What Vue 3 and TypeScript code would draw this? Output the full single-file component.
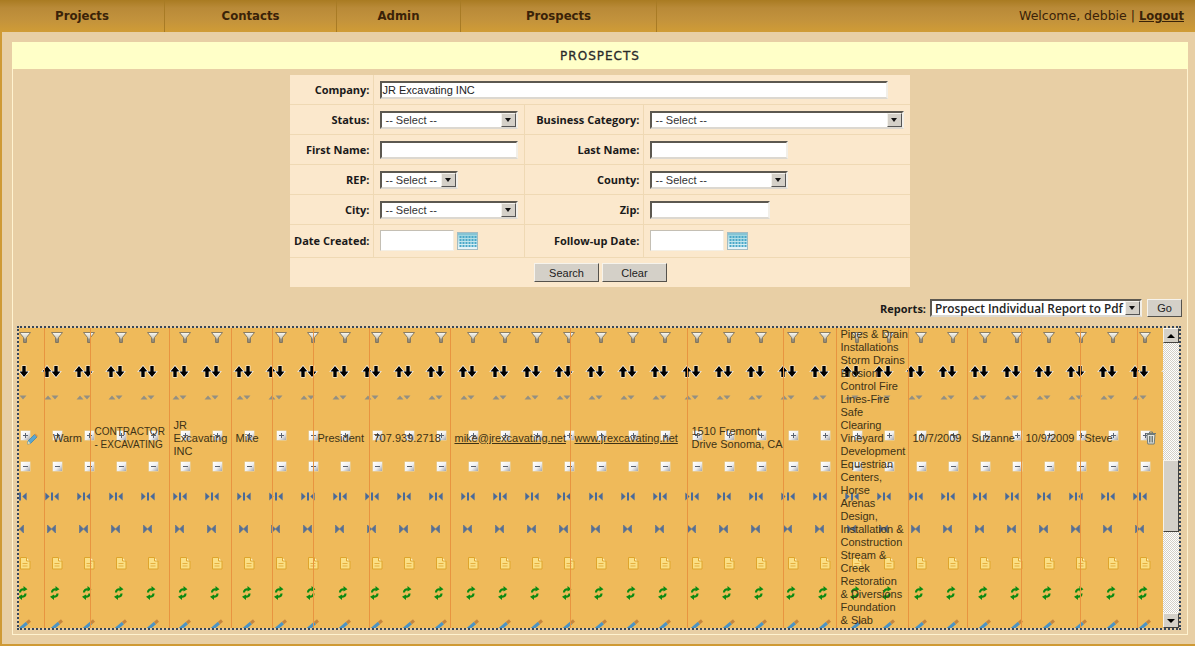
<template>
  <div class="page">
    <!-- shared icons -->
    <svg class="defs" width="0" height="0">
      <defs>
        <linearGradient id="btnGrad" x1="0" y1="0" x2="1" y2="1">
          <stop offset="0" stop-color="#ffffff" />
          <stop offset="0.55" stop-color="#f0f0f0" />
          <stop offset="1" stop-color="#a4a6ae" />
        </linearGradient>
        <linearGradient id="funnelGrad" x1="0" y1="0" x2="0" y2="1">
          <stop offset="0" stop-color="#fbfaf4" />
          <stop offset="1" stop-color="#aca694" />
        </linearGradient>
        <linearGradient id="calGrad" x1="0" y1="0" x2="0" y2="1">
          <stop offset="0" stop-color="#8fd0dc" />
          <stop offset="1" stop-color="#eef8fb" />
        </linearGradient>
        <symbol id="cal" viewBox="0 0 21 18">
          <rect x="0.5" y="0.5" width="20" height="17" fill="url(#calGrad)" stroke="#a4bcc2" />
          <rect x="1" y="1" width="19" height="2" fill="#86c4d4" />
          <g fill="#4aa8c8">
            <template v-for="r in 4" :key="r">
              <rect v-for="c in 6" :key="c" :x="c * 3 - 0.5" :y="r * 3 + 1" width="2" height="2" />
            </template>
          </g>
        </symbol>
      </defs>
    </svg>

    <nav class="nav">
      <a v-for="item in navItems" :key="item.label" class="nav-item" :style="{ width: item.width + 'px' }">{{ item.label }}</a>
      <div class="welcome">Welcome, debbie | <a class="logout">Logout</a></div>
    </nav>

    <main class="content">
      <section class="panel">
        <h1 class="title">PROSPECTS</h1>

        <table class="form">
          <colgroup>
            <col style="width: 84px" />
            <col style="width: 151px" />
            <col style="width: 119px" />
            <col style="width: 266px" />
          </colgroup>
          <tbody>
            <tr class="first-row">
              <th>Company:</th>
              <td colspan="3"><input class="field w-508" value="JR Excavating INC" /></td>
            </tr>
            <tr>
              <th>Status:</th>
              <td><div class="sel w-138"><span>-- Select --</span><i class="sel-btn"></i></div></td>
              <th>Business Category:</th>
              <td><div class="sel w-254"><span>-- Select --</span><i class="sel-btn"></i></div></td>
            </tr>
            <tr>
              <th>First Name:</th>
              <td><input class="field w-138" /></td>
              <th>Last Name:</th>
              <td><input class="field w-138" /></td>
            </tr>
            <tr>
              <th>REP:</th>
              <td><div class="sel w-78"><span>-- Select --</span><i class="sel-btn"></i></div></td>
              <th>County:</th>
              <td><div class="sel w-138"><span>-- Select --</span><i class="sel-btn"></i></div></td>
            </tr>
            <tr>
              <th>City:</th>
              <td><div class="sel w-138"><span>-- Select --</span><i class="sel-btn"></i></div></td>
              <th>Zip:</th>
              <td><input class="field w-120" /></td>
            </tr>
            <tr class="date-row">
              <th>Date Created:</th>
              <td>
                <div class="date"><input class="field-flat" /><svg class="cal" width="21" height="18"><use href="#cal" /></svg></div>
              </td>
              <th>Follow-up Date:</th>
              <td>
                <div class="date"><input class="field-flat" /><svg class="cal" width="21" height="18"><use href="#cal" /></svg></div>
              </td>
            </tr>
            <tr class="actions-row">
              <td colspan="4">
                <div class="actions">
                  <button class="btn w-65">Search</button>
                  <button class="btn w-65">Clear</button>
                </div>
              </td>
            </tr>
          </tbody>
        </table>

        <div class="reports">
          <label>Reports:</label>
          <div class="sel report-sel"><span>Prospect Individual Report to Pdf</span><i class="sel-btn"></i></div>
          <button class="btn go">Go</button>
        </div>

        <div class="grid-box">
          <div class="viewport">
            <!-- the grid's broken sprite background, tiled behind the row -->
            <svg class="sprite" width="1144" height="300">
              <defs>
                <pattern id="tile" patternUnits="userSpaceOnUse" x="-10" y="0" width="32" height="320">
                  <!-- filter -->
                  <path d="M10.500 4.500h11l-4 5v5h-3v-5z" fill="url(#funnelGrad)" stroke="#7e745e" stroke-width="0.9" />
                  <path d="M15.500 10.500h1v4h-1z" fill="#6f634c" />
                  <!-- sort arrows -->
                  <g fill="#000" stroke="#fff" stroke-width="1.2" paint-order="stroke">
                    <path d="M6 38l4.500 5.500h-2.800v5.500h-3.400v-5.500h-2.800z" />
                    <path d="M15 49l4.500-5.500h-2.800v-5.500h-3.400v5.500h-2.800z" />
                  </g>
                  <!-- small triangles -->
                  <g fill="#938f82">
                    <path d="M7 67.500l3.500 4h-7z" />
                    <path d="M14 71.500l3.500-4h-7z" />
                  </g>
                  <!-- plus -->
                  <rect x="11.500" y="102.500" width="10" height="10" fill="#e4d8b8" />
                  <rect x="12" y="103" width="9" height="9" fill="url(#btnGrad)" />
                  <path d="M14 107.500h5M16.500 105v5" stroke="#5a6270" stroke-width="1" />
                  <!-- minus -->
                  <rect x="11.500" y="133.500" width="10" height="10" fill="#e4d8b8" />
                  <rect x="12" y="134" width="9" height="9" fill="url(#btnGrad)" />
                  <path d="M14 138.500h5" stroke="#5a6270" stroke-width="1" />
                  <!-- split -->
                  <g fill="#4a6a98">
                    <path d="M4.300 164.500l4.300 4-4.300 4z" />
                    <rect x="10" y="164.500" width="2" height="8" />
                    <path d="M17.600 164.500v8l-4.300-4z" />
                  </g>
                  <!-- collapse -->
                  <path d="M6.500 197l4 4 4-4v8l-4-4-4 4z" fill="#566f94" stroke="#566f94" stroke-width="0.6" />
                  <!-- document -->
                  <path d="M11.500 229.500h6l3.500 3.500v8h-9.500z" fill="#fbdf84" stroke="#dfa52c" />
                  <path d="M17.500 229.500v3.500h3.500" fill="#fff2c0" stroke="#dfa52c" />
                  <path d="M13.500 235.500h5M13.500 238h5" stroke="#e6b040" />
                  <!-- refresh -->
                  <g fill="none" stroke="#0b8a12" stroke-width="2.200">
                    <path d="M11 264.500c0-2.500 2-3.500 4-3" />
                    <path d="M16.500 265.500c0 2.500-2 3.500-4 3" />
                  </g>
                  <path d="M14.500 258l4 3.300-4 2.200zM13 272l-4-3.300 4-2.200z" fill="#0b8a12" />
                  <!-- pencil -->
                  <path d="M11 301l7-6" stroke="#4d94c4" stroke-width="3.200" />
                  <path d="M18 295l3-2.500" stroke="#c6863e" stroke-width="3.200" />
                </pattern>
              </defs>
              <rect width="1144" height="300" fill="url(#tile)" />
            </svg>

            <table class="rows">
              <colgroup>
                <col v-for="(w, i) in colWidths" :key="i" :style="{ width: w + 'px' }" />
              </colgroup>
              <tbody>
                <tr>
                  <td class="icon-cell">
                    <svg width="12" height="13" viewBox="0 0 12 13">
                      <path d="M2 9l6.500-6.500 2.500 2.500-6.500 6.500-3 .5z" fill="#5aa6d0" stroke="#3c7ea8" stroke-width="0.7" />
                      <path d="M8.500 2.500l1-1 2.500 2.500-1 1z" fill="#d8964a" />
                      <path d="M1.500 12l.5-3 2.500 2.500z" fill="#efe0b0" />
                    </svg>
                  </td>
                  <td class="warm">Warm</td>
                  <td class="caps">CONTRACTOR<br />- EXCAVATING</td>
                  <td>JR<br />Excavating<br />INC</td>
                  <td>Mike</td>
                  <td></td>
                  <td>President</td>
                  <td>707.939.2718</td>
                  <td><a class="link">mike@jrexcavating.net</a></td>
                  <td><a class="link">www.jrexcavating.net</a></td>
                  <td class="nowrap">1510 Fremont<br />Drive Sonoma, CA</td>
                  <td></td>
                  <td class="tall"><template v-for="line in services" :key="line">{{ line }}<br /></template></td>
                  <td>10/7/2009</td>
                  <td>Suzanne</td>
                  <td>10/9/2009</td>
                  <td>Steve</td>
                  <td class="trash-cell">
                    <svg width="12" height="14" viewBox="0 0 12 14" fill="none" stroke="#6f7a78">
                      <path d="M1 2.500h10M4.500 2.500v-1.500h3v1.500" />
                      <path d="M2 3.500l.8 9.500h6.400l.8-9.500z" fill="#e4e6e2" />
                      <path d="M4.500 5v6.500M6 5v6.500M7.500 5v6.500" />
                    </svg>
                  </td>
                </tr>
              </tbody>
            </table>
          </div>

          <div class="scrollbar">
            <div class="sb-btn"><i class="tri up"></i></div>
            <div class="sb-track">
              <div class="sb-thumb"></div>
            </div>
            <div class="sb-btn"><i class="tri down"></i></div>
          </div>
        </div>
      </section>
    </main>
  </div>
</template>

<script setup lang="ts">
const navItems = [
  { label: 'Projects', width: 165 },
  { label: 'Contacts', width: 172 },
  { label: 'Admin', width: 124 },
  { label: 'Prospects', width: 196 },
]

// x of each column's right rule, read off the screen
const GRID_LEFT = 19
const lines = [44, 90, 169, 231, 272, 313, 369, 450, 570, 687, 783, 836, 908, 967, 1021, 1080, 1137, 1163]
const colWidths = lines.map((x, i) => x + 1 - (i === 0 ? GRID_LEFT : lines[i - 1] + 1))

const services = [
  'Pipes & Drain',
  'Installations',
  'Storm Drains',
  'Erosion',
  'Control Fire',
  'Lines-Fire',
  'Safe',
  'Clearing',
  'Vineyard',
  'Development',
  'Equestrian',
  'Centers,',
  'Horse',
  'Arenas',
  'Design,',
  'Installation &',
  'Construction',
  'Stream &',
  'Creek',
  'Restoration',
  '& Diversions',
  'Foundation',
  '& Slab',
]
</script>

<style>
body {
  margin: 0;
  background: #cf9a35;
}
</style>

<style scoped>
.defs {
  position: absolute;
}

.page {
  width: 1195px;
  height: 646px;
  overflow: hidden;
  font-family: "Liberation Sans", sans-serif;
  font-size: 11px;
  color: #222;
}

.nav {
  height: 32px;
  display: flex;
  align-items: stretch;
  background: linear-gradient(#a97b22 0, #b98a38 25%, #c2923c 60%, #d09c36 100%);
  font-family: "DejaVu Sans", sans-serif;
  font-size: 11.7px;
  color: #3a2208;
}

.nav-item {
  box-sizing: border-box;
  display: flex;
  align-items: center;
  justify-content: center;
  border-right: 1px solid #a87b25;
  font-weight: 700;
}

.welcome {
  margin-left: auto;
  padding-right: 11px;
  line-height: 32px;
  font-size: 12.500px;
}

.logout {
  font-weight: 700;
  font-size: 11.500px;
  text-decoration: underline;
}

.content {
  box-sizing: border-box;
  height: 612px;
  margin-left: 2px;
  padding: 10px 0 0 10px;
  background: #e8cfa5;
}

.panel {
  box-sizing: border-box;
  width: 1176px;
  height: 593px;
  border: 1px solid #fff3d0;
  border-top: 0;
}

.title {
  margin: 0 -1px;
  height: 27px;
  background: #ffffc8;
  font-family: "DejaVu Sans", sans-serif;
  font-size: 12px;
  font-weight: 400;
  letter-spacing: 1px;
  line-height: 28px;
  text-align: center;
  color: #2a2a2a;
  -webkit-text-stroke: 0.3px #2a2a2a;
}

.form {
  width: 620px;
  margin: 6px auto 0;
  border-collapse: collapse;
  table-layout: fixed;
  background: #fbe8cc;
}

.form th,
.form td {
  box-sizing: border-box;
  height: 30px;
  padding: 1px 5px 0 6px;
  border: 1px solid #efd9b4;
  vertical-align: middle;
}

.form .first-row th,
.form .first-row td {
  height: 29px;
  border-top: 0;
}

.form tr > :first-child {
  border-left: 0;
}

.form tr > :last-child {
  border-right: 0;
}

.form th {
  padding: 0 4px 0 0;
  font-family: "Open Sans", sans-serif;
  font-size: 11px;
  font-weight: 700;
  text-align: right;
  color: #1a1a1a;
  white-space: nowrap;
}

.date-row th,
.date-row td {
  height: 33px;
}

.form .date-row td {
  padding-top: 0;
}

.form .actions-row td {
  height: 30px;
  border-bottom: 0;
}

.actions {
  display: flex;
  justify-content: center;
  gap: 3px;
}

.field,
.sel {
  box-sizing: border-box;
  height: 18px;
  border: 2px solid;
  border-color: #5c5850 #f2efe8 #dcd8d0 #5c5850;
  background: #fff;
}

.field {
  display: block;
  padding: 0;
  font: 11px "Liberation Sans", sans-serif;
  color: #222;
  outline: 0;
}

.w-508 {
  width: 508px;
}

.w-254 {
  width: 254px;
}

.w-138 {
  width: 138px;
}

.w-120 {
  width: 120px;
}

.w-78 {
  width: 78px;
}

.w-65 {
  width: 65px;
}

.sel {
  display: flex;
  align-items: center;
  justify-content: space-between;
  padding-left: 3px;
  line-height: 14px;
  color: #333;
  white-space: nowrap;
}

.sel-btn {
  flex: none;
  box-sizing: border-box;
  position: relative;
  width: 15px;
  height: 14px;
  background: #d4d0c8;
  border: 1px solid;
  border-color: #f4f2ec #555 #555 #f4f2ec;
}

.sel-btn::after {
  content: "";
  position: absolute;
  left: 3px;
  top: 4px;
  border: 3px solid transparent;
  border-top: 4px solid #111;
  border-bottom: 0;
}

.date {
  display: flex;
  align-items: center;
  gap: 3px;
}

.field-flat {
  box-sizing: border-box;
  width: 74px;
  height: 21px;
  padding: 0;
  background: #fff;
  border: 1px solid;
  border-color: #c4bfb4 #f4efe4 #f4efe4 #c4bfb4;
  outline: 0;
}

.cal {
  display: block;
}

.btn {
  box-sizing: border-box;
  height: 19px;
  padding: 0;
  background: #d4d0c8;
  border: 1px solid;
  border-color: #f6f3ec #55524c #55524c #f6f3ec;
  font: 11px "Liberation Sans", sans-serif;
  color: #222;
}

.reports {
  display: flex;
  align-items: center;
  justify-content: flex-end;
  gap: 4px;
  margin-top: 12px;
  padding-right: 5px;
}

.reports label {
  font-family: "Open Sans", sans-serif;
  font-weight: 700;
  font-size: 11px;
  color: #1a1a1a;
}

.report-sel {
  width: 212px;
  font-family: "Open Sans", sans-serif;
  font-weight: 600;
  font-size: 11.800px;
  color: #222;
}

.go {
  width: 35px;
  height: 18px;
  margin-left: 1px;
}

.grid-box {
  box-sizing: border-box;
  display: flex;
  width: 1164px;
  height: 304px;
  margin: 9px 0 0 4px;
  border: 2px dotted #36465a;
}

.viewport {
  position: relative;
  width: 1144px;
  overflow: hidden;
  background: #efba5a;
}

.sprite {
  position: absolute;
  left: 0;
  top: 0;
}

.rows {
  position: relative;
  width: 1144px;
  height: 380px;
  margin-top: -80px;
  border-collapse: separate;
  border-spacing: 0;
  table-layout: fixed;
  line-height: 13px;
  color: #3d3216;
}

.rows td {
  box-sizing: border-box;
  height: 380px;
  padding: 0 0 0 3.500px;
  border-right: 1px solid #e89440;
  vertical-align: middle;
}

.rows td:last-child {
  border-right: 0;
}

.rows .icon-cell {
  padding-left: 7px;
  white-space: nowrap;
}

.rows .icon-cell svg,
.rows .trash-cell svg {
  display: block;
}

.rows .warm {
  padding-left: 8px;
}

.rows .caps {
  font-size: 10px;
  white-space: nowrap;
}

.rows .nowrap {
  white-space: nowrap;
}

.rows .tall {
  vertical-align: bottom;
  padding-bottom: 1px;
  white-space: nowrap;
}

.rows .trash-cell {
  padding-left: 7px;
}

.link {
  text-decoration: underline;
  white-space: nowrap;
}

.scrollbar {
  display: flex;
  flex-direction: column;
  width: 16px;
}

.sb-btn {
  flex: none;
  box-sizing: border-box;
  height: 15px;
  background: #d4d0c8;
  border: 1px solid;
  border-color: #f6f3ec #44423e #44423e #f6f3ec;
  display: flex;
  align-items: center;
  justify-content: center;
}

.tri {
  border: 4px solid transparent;
}

.tri.up {
  border-top: 0;
  border-bottom: 4px solid #000;
}

.tri.down {
  border-bottom: 0;
  border-top: 4px solid #000;
}

.sb-track {
  flex: 1;
  padding-top: 117px;
  background: repeating-conic-gradient(#ffffff 0 25%, #d4d0c8 0 50%) 0 0 / 2px 2px;
}

.sb-thumb {
  box-sizing: border-box;
  height: 72px;
  background: #d4d0c8;
  border: 1px solid;
  border-color: #f6f3ec #44423e #44423e #f6f3ec;
}
</style>
